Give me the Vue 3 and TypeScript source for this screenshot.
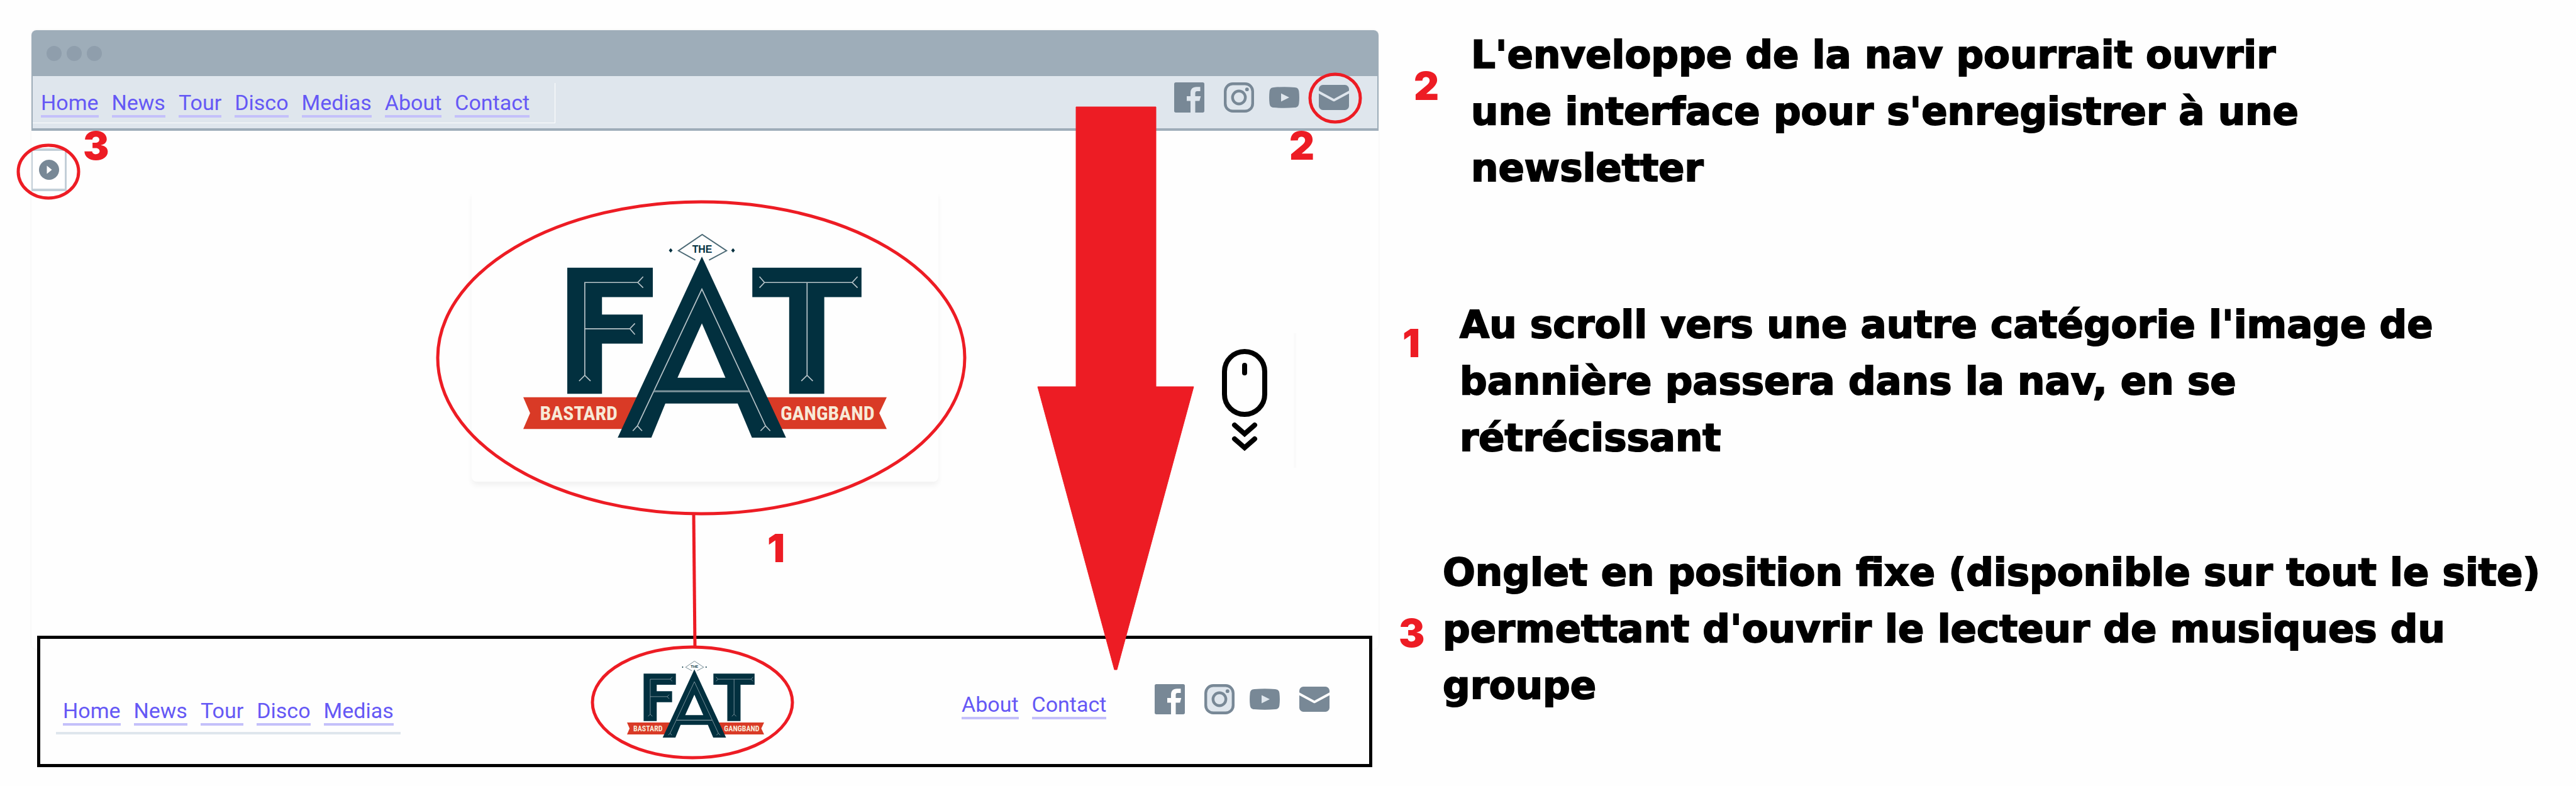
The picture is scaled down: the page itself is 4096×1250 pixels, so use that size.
<script setup lang="ts">
import { defineComponent, h } from 'vue'

interface Note {
  id: string
  mark: string
  lines: string[]
}

const mainLinks: string[] = ['Home', 'News', 'Tour', 'Disco', 'Medias', 'About', 'Contact']
const leftLinks: string[] = mainLinks.slice(0, 5)
const rightLinks: string[] = mainLinks.slice(5)

const notes: Note[] = [
  {
    id: 'newsletter',
    mark: '2',
    lines: ["L'enveloppe de la nav pourrait ouvrir", "une interface pour s'enregistrer à une", 'newsletter'],
  },
  {
    id: 'scroll',
    mark: '1',
    lines: ["Au scroll vers une autre catégorie l'image de", 'bannière passera dans la nav, en se', 'rétrécissant'],
  },
  {
    id: 'music',
    mark: '3',
    lines: ['Onglet en position fixe (disponible sur tout le site)', "permettant d'ouvrir le lecteur de musiques du", 'groupe'],
  },
]

const NAVY = '#02303f'
const RED = '#d93a26'

const condensed = {
  'font-family': '"Liberation Sans Narrow", "Roboto Condensed", Roboto, sans-serif',
  'font-weight': 700,
  'font-size': 32,
  'text-anchor': 'middle',
  fill: '#f7e9d7',
}

// Band logo, used large in the banner and small in the reduced nav
const BandLogo = defineComponent({
  name: 'BandLogo',
  setup: () => () =>
    h('svg', { viewBox: '0 0 583 327', role: 'img', 'aria-label': 'The Fat Bastard Gangband', style: { display: 'block' } }, [
      h('path', { fill: RED, d: 'M0 262H200V313H0L11 287.5ZM583 262H380V313H583L571 287.5Z' }),
      h('path', {
        fill: NAVY,
        d: 'M70.6 54.3H207.8V101.4H126.3V129.3H191.7V176H126.3V256.4H70.6ZM367.4 54.3H542.5V101.4H482.8V256.4H426.5V101.4H367.4Z',
      }),
      h('path', {
        fill: NAVY,
        'fill-rule': 'evenodd',
        d: 'M286.5 36.4L421.4 326.8H366.8L343.9 272.1H227.9L205.5 326.8H151.5ZM286.5 143.6L324.3 230.7H247.4Z',
      }),
      h('path', {
        fill: 'none',
        stroke: '#b9c5ca',
        'stroke-width': 1.7,
        d:
          'M192.3 68.6L183.7 77.9L192.3 86.4M183.7 77.9H98.7V226.8M89.6 236L98.7 226.8L107.9 236M98.7 152.1H171M179.1 143.6L171 152.1L179.1 161.4' +
          'M378.9 68.6L386.9 77.9L378.9 86.4M386.9 77.9H527.6M536.2 68.6L527.6 77.9L536.2 86.4M455.2 77.9V226.8M446 236L455.2 226.8L464.4 236' +
          'M175.7 316L183.1 307.9L190.6 316M183.1 307.9L286.5 88.6L388.6 307.9M380.6 316L388.6 307.9L396.1 316',
      }),
      h('path', { fill: 'none', stroke: '#7d939c', 'stroke-width': 3, d: 'M209.5 252.5H362.2' }),
      h('path', { fill: 'none', stroke: '#4a6874', 'stroke-width': 2, d: 'M276 42L249 27L287 1L326 27L298 42' }),
      h('path', { fill: NAVY, d: 'M236.5 23L239.5 26.5L236.5 30L233.5 26.5ZM336.5 23L339.5 26.5L336.5 30L333.5 26.5Z' }),
      h(
        'text',
        {
          x: 287,
          y: 30.5,
          'text-anchor': 'middle',
          'font-family': '"Liberation Sans", sans-serif',
          'font-weight': 700,
          'font-size': 16,
          fill: NAVY,
        },
        'THE',
      ),
      h('text', { x: 89, y: 299, ...condensed }, 'BASTARD'),
      h('text', { x: 488, y: 299, ...condensed }, 'GANGBAND'),
    ]),
})

// Social icons; "inner" is the colour seen through the cut-outs
const SocialIcons = defineComponent({
  name: 'SocialIcons',
  props: { inner: { type: String, required: true } },
  setup: (props) => () => {
    const link = (label: string, cls: string, children: ReturnType<typeof h>[]) =>
      h('a', { href: '#', 'aria-label': label, class: cls, style: { display: 'block', width: '48px', height: '48px' } }, [
        h('svg', { viewBox: '0 0 48 48', width: 48, height: 48, fill: '#788896', style: { display: 'block' } }, children),
      ])
    return h('div', { class: 'socials' }, [
      link('Facebook', 'facebook', [
        h('path', {
          d: 'M2.7 0H45.3A2.7 2.7 0 0 1 48 2.7V45.3A2.7 2.7 0 0 1 45.3 48H33.5V29.4H40.3L42.3 22H33.5V17C33.5 14.9 34.5 14 36.5 14H41.5V7.3H35.5C29 7.3 26 10.8 26 17V22H20V29.4H26V48H2.7A2.7 2.7 0 0 1 0 45.3V2.7A2.7 2.7 0 0 1 2.7 0Z',
        }),
      ]),
      link('Instagram', 'instagram', [
        h('rect', { x: 2.2, y: 2.2, width: 43.6, height: 43.6, rx: 12, fill: props.inner, stroke: '#788896', 'stroke-width': 4.4 }),
        h('circle', { cx: 24, cy: 24, r: 10.2, fill: 'none', stroke: '#788896', 'stroke-width': 4.4 }),
        h('circle', { cx: 36.8, cy: 11.2, r: 2.9 }),
      ]),
      link('YouTube', 'youtube', [
        h('path', {
          d: 'M7.5 7.9Q24 6.4 40.5 7.9C45 8.3 46.8 10 47.4 14.5Q48.5 24 47.4 33.5C46.8 38 45 39.7 40.5 40.1Q24 41.6 7.5 40.1C3 39.7 1.2 38 .6 33.5Q-.5 24 .6 14.5C1.2 10 3 8.3 7.5 7.9Z',
        }),
        h('path', { fill: props.inner, d: 'M19 17.5V30.5L32 24Z' }),
      ]),
      link('Newsletter', 'mail', [
        h('path', {
          d: 'M6.5 4H41.5A6.5 6.5 0 0 1 48 10.5V13.3L24 26.3L0 13.3V10.5A6.5 6.5 0 0 1 6.5 4ZM0 17.8L22.8 30Q24 30.6 25.2 30L48 17.8V37.5A6.5 6.5 0 0 1 41.5 44H6.5A6.5 6.5 0 0 1 0 37.5Z',
        }),
      ]),
    ])
  },
})
</script>

<template>
  <main class="board">
    <section class="mock">
      <div class="window">
        <div class="titlebar"><i></i><i></i><i></i></div>
        <header class="topnav">
          <nav class="links boxed">
            <a v-for="l in mainLinks" :key="l" href="#">{{ l }}</a>
          </nav>
          <SocialIcons inner="#dfe6ed" />
        </header>
        <div class="hero">
          <button class="player" type="button" aria-label="Lecteur">
            <svg viewBox="0 0 32 32" width="32" height="32">
              <circle cx="16" cy="16" r="16" fill="#788896" />
              <path d="M12.500 9.500V22.500L20.500 16Z" fill="#fff" />
            </svg>
          </button>
          <div class="banner-row">
            <div class="card"><BandLogo /></div>
            <div class="hint">
              <svg viewBox="0 0 72 164" width="72" height="164" fill="none" stroke="#000" stroke-width="8">
                <rect x="4" y="4" width="64" height="100" rx="32" />
                <path d="M36 26V38" stroke-linecap="round" />
                <path d="M20 121L36 135L52 121M20 143L36 157L52 143" stroke-linecap="round" />
              </svg>
            </div>
          </div>
        </div>
      </div>
      <footer class="reduced">
        <nav class="links left">
          <a v-for="l in leftLinks" :key="l" href="#">{{ l }}</a>
        </nav>
        <div class="mini"><BandLogo /></div>
        <nav class="links right">
          <a v-for="l in rightLinks" :key="l" href="#">{{ l }}</a>
        </nav>
        <SocialIcons inner="#dfe6ed" />
      </footer>
      <svg class="marks" viewBox="0 0 2200 1250" preserveAspectRatio="xMinYMin meet">
        <path
          d="M1711 170H1838V615H1898L1776 1065H1772L1650 615H1711Z"
          fill="#ed1c24"
          stroke="#ed1c24"
          stroke-width="1"
        />
        <g fill="none" stroke="#ed1c24" stroke-width="5">
          <ellipse cx="77" cy="273" rx="48" ry="42" />
          <ellipse cx="1115" cy="569" rx="419" ry="248" />
          <ellipse cx="1101" cy="1117" rx="159" ry="88" />
          <ellipse cx="2123" cy="156" rx="40" ry="38" />
          <path d="M1103 818L1105 1028" />
        </g>
        <g class="digits">
          <text x="132" y="254">3</text>
          <text x="2050" y="254">2</text>
          <text x="1220" y="894">1</text>
        </g>
      </svg>
    </section>
    <aside class="notes">
      <article v-for="n in notes" :key="n.id" class="note" :class="n.id">
        <b>{{ n.mark }}</b>
        <p><span v-for="line in n.lines" :key="line">{{ line }}</span></p>
      </article>
    </aside>
  </main>
</template>

<style>
body {
  margin: 0;
  background: #fefefe;
}
</style>

<style scoped>
.board {
  display: grid;
  grid-template-columns: 2200fr 1896fr;
  box-sizing: border-box;
  min-height: 100vh;
  font-family: Roboto, sans-serif;
}
.mock {
  position: relative;
  padding: 48px 8px 0 50px;
}
.window {
  border-radius: 8px;
  box-shadow: 0 0 4px rgba(0, 0, 0, 0.06);
}
.titlebar {
  display: flex;
  gap: 8px;
  align-items: center;
  height: 73px;
  padding: 0 24px;
  box-sizing: border-box;
  border-radius: 8px 8px 0 0;
  background: #9eadb9;
}
.titlebar i {
  width: 24px;
  height: 24px;
  border-radius: 50%;
  background: #8f9eac;
}
.topnav {
  display: flex;
  justify-content: space-between;
  align-items: flex-start;
  height: 83px;
  padding-right: 45px;
  border: solid #9eadb9;
  border-width: 0 2px 4px;
  background: #dfe6ed;
}
.links {
  display: flex;
  gap: 21px;
}
.links a {
  color: #6558f5;
  font-size: 34px;
  line-height: 40px;
  text-decoration: none;
  border-bottom: 4px solid #c4c0fa;
}
.boxed {
  align-items: flex-end;
  box-sizing: border-box;
  height: 64px;
  margin-top: 11px;
  padding: 0 40px 8px 13px;
  border: solid #fff;
  border-width: 0 1px 1px 0;
}
:deep(.socials) {
  display: flex;
  gap: 31px;
}
:deep(.youtube) {
  margin-left: -7px;
}
.topnav :deep(.socials) {
  margin-top: 10px;
}
.hero {
  height: 824px;
  padding-top: 28px;
  box-sizing: border-box;
}
.player {
  display: flex;
  align-items: center;
  justify-content: center;
  width: 56px;
  height: 68px;
  padding: 0;
  border: solid #c3cfd8;
  border-width: 4px 3px 4px 2px;
  background: #fff;
}
.banner-row {
  display: flex;
  align-items: flex-start;
}
.card {
  margin-left: 700px;
  width: 742px;
  box-sizing: border-box;
  padding: 68px 82px 70px;
  border-radius: 8px;
  box-shadow: 0 6px 8px rgba(0, 0, 0, 0.05);
}
.hint {
  display: flex;
  align-items: center;
  height: 214px;
  margin: 226px 131px 0 auto;
  padding-right: 42px;
  border-right: 4px solid #fafafa;
}
.reduced {
  display: grid;
  grid-template-columns: 908fr 532fr 307fr 341fr;
  align-items: start;
  justify-items: start;
  box-sizing: border-box;
  height: 209px;
  margin: -21px 10px 0 9px;
  padding-left: 25px;
  border: 5px solid #000;
  background: #fefefe;
  position: relative;
}
.left {
  margin-top: 94px;
  padding: 0 11px 10px;
  border-bottom: 4px solid #dfe6ed;
}
.mini {
  width: 218px;
  margin-top: 35px;
}
.right {
  margin-top: 84px;
}
.reduced :deep(.socials) {
  margin-top: 72px;
}
.marks {
  position: absolute;
  top: 0;
  left: 0;
  width: 100%;
  pointer-events: none;
}
.digits {
  fill: #ed1c24;
  font: 900 62px Inter, sans-serif;
}
.notes {
  padding-top: 42px;
}
.note {
  display: flex;
  font: 700 61px/90px 'DejaVu Sans', sans-serif;
  color: #000;
}
.note b {
  flex: none;
  font: 900 62px/90px Inter, sans-serif;
  color: #ed1c24;
}
.note p {
  margin: 0;
  -webkit-text-stroke: 2px #000;
}
.note span {
  display: block;
  white-space: nowrap;
}
.newsletter b {
  width: 91px;
  margin: 50px 0 0 48px;
}
.scroll {
  margin-top: 159px;
}
.scroll b {
  width: 91px;
  margin: 30px 0 0 30px;
}
.music {
  margin-top: 124px;
}
.music b {
  width: 70px;
  margin: 97px 0 0 24px;
}
</style>
